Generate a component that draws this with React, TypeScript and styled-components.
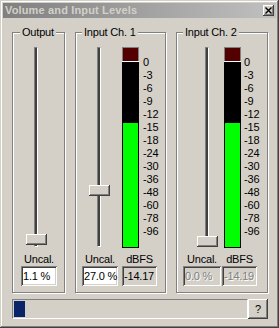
import React from 'react';
import styled, { createGlobalStyle } from 'styled-components';

const GlobalStyle = createGlobalStyle`
  html, body {
    margin: 0;
    padding: 0;
    background: #d4d0c8;
  }
  body {
    font-family: "Liberation Sans", Arial, sans-serif;
    font-size: 11px;
    letter-spacing: -0.2px;
    color: #000;
  }
`;

const SCALE = [0, -3, -6, -9, -12, -15, -18, -24, -30, -36, -48, -60, -78, -96];

// meter geometry: bar top sits at the "0" mark, bar bottom 185px below
const BAR_HEIGHT = 185;
const STEP = 12.95;

const levelToFill = (db: number) => {
  let idx = SCALE.length - 1;
  for (let i = 0; i < SCALE.length - 1; i++) {
    if (db <= SCALE[i] && db >= SCALE[i + 1]) {
      idx = i + (SCALE[i] - db) / (SCALE[i] - SCALE[i + 1]);
      break;
    }
  }
  return Math.round(BAR_HEIGHT - idx * STEP);
};

const Window = styled.div`
  width: 279px;
  height: 328px;
  box-sizing: border-box;
  padding: 3px;
  background: #d4d0c8;
  box-shadow: inset -1px -1px #404040, inset 1px 1px #d4d0c8,
    inset -2px -2px #808080, inset 2px 2px #fff;
  display: flex;
  flex-direction: column;
`;

const TitleBar = styled.div`
  height: 15px;
  display: flex;
  align-items: center;
  justify-content: space-between;
  padding: 0 2px;
  background: linear-gradient(to right, #808080, #c0c0c0);
`;

const Title = styled.span`
  font-weight: bold;
  font-size: 11px;
  letter-spacing: 0.15px;
  line-height: 15px;
  color: #d4d0c8;
`;

const CloseButton = styled.div`
  width: 11px;
  height: 11px;
  box-sizing: border-box;
  background: #d4d0c8;
  box-shadow: inset -1px -1px #404040, inset 1px 1px #fff, inset -2px -2px #808080;
  display: flex;
  align-items: center;
  justify-content: center;
`;

const Body = styled.div`
  display: flex;
  flex-direction: column;
  gap: 6px;
  padding: 14px 8px 0 9px;
`;

const GroupRow = styled.div`
  display: flex;
  gap: 10px;
`;

const GroupBox = styled.div<{ $width: number }>`
  position: relative;
  box-sizing: border-box;
  width: ${p => p.$width}px;
  height: 261px;
  border: 1px solid #808080;
  box-shadow: inset 1px 1px #fff, 1px 1px #fff;
  padding-top: 14px;
  display: flex;
  flex-direction: column;
`;

const Legend = styled.span<{ $inset: number }>`
  position: absolute;
  top: -7px;
  left: ${p => p.$inset}px;
  padding: 0 2px;
  line-height: 13px;
  background: #d4d0c8;
  white-space: nowrap;
`;

const MeterArea = styled.div<{ $offset: number }>`
  display: flex;
  height: 201px;
  padding-left: ${p => p.$offset}px;
`;

const Slider = styled.div`
  position: relative;
  width: 21px;
  height: 200px;
  flex-shrink: 0;
`;

const Track = styled.div`
  width: 4px;
  height: 100%;
  margin-left: 8px;
  box-sizing: border-box;
  background: #404040;
  border-left: 1px solid #808080;
  border-top: 1px solid #808080;
  border-right: 1px solid #fff;
  border-bottom: 1px solid #fff;
`;

const Thumb = styled.div`
  position: absolute;
  left: 0;
  width: 21px;
  height: 11px;
  box-sizing: border-box;
  background: #d4d0c8;
  box-shadow: inset -1px -1px #404040, inset 1px 1px #fff, inset -2px -2px #808080;
`;

const Meter = styled.div<{ $gap: number }>`
  width: 17px;
  height: 201px;
  margin-left: ${p => p.$gap}px;
  display: flex;
  flex-direction: column;
  flex-shrink: 0;
`;

const Clip = styled.div`
  height: 14px;
  box-sizing: border-box;
  background: #520000;
  border: 1px solid #808080;
  border-bottom: none;
`;

const Separator = styled.div`
  height: 1px;
  background: #fff;
`;

const Bar = styled.div`
  flex: 1;
  background: #000;
  padding: 0 1px 1px;
  display: flex;
  flex-direction: column;
  justify-content: flex-end;
`;

const Fill = styled.div`
  background: #00ff00;
`;

const Scale = styled.div<{ $gap: number }>`
  margin-left: ${p => p.$gap}px;
  padding-top: 9px;
  display: flex;
  flex-direction: column;
  line-height: 13px;
`;

const FieldRow = styled.div<{ $offset: number; $gap: number }>`
  display: flex;
  padding-left: ${p => p.$offset}px;
  gap: ${p => p.$gap}px;
`;

const Caption = styled.div<{ $width: number }>`
  width: ${p => p.$width}px;
  margin-top: 5px;
  line-height: 13px;
  text-align: center;
  white-space: nowrap;
`;

const Edit = styled.div<{ $width: number; $readOnly?: boolean; $disabled?: boolean }>`
  width: ${p => p.$width}px;
  height: 20px;
  box-sizing: border-box;
  padding: 2px 2px 0 2px;
  line-height: 16px;
  white-space: nowrap;
  overflow: hidden;
  background: ${p => (p.$readOnly || p.$disabled ? '#d4d0c8' : '#fff')};
  color: ${p => (p.$disabled ? '#808080' : '#000')};
  text-shadow: ${p => (p.$disabled ? '1px 1px 0 #fff' : 'none')};
  box-shadow: inset 1px 1px #808080, inset -1px -1px #fff,
    inset 2px 2px #404040, inset -2px -2px #d4d0c8;
`;

const BottomRow = styled.div`
  display: flex;
  height: 20px;
`;

const Progress = styled.div`
  flex: 1;
  box-sizing: border-box;
  padding: 1px;
  border-top: 1px solid #808080;
  border-left: 1px solid #808080;
  border-bottom: 1px solid #fff;
  border-right: 1px solid #fff;
`;

const ProgressBlock = styled.div`
  width: 11px;
  height: 100%;
  background: #0a246a;
`;

const HelpButton = styled.div`
  width: 20px;
  height: 20px;
  box-sizing: border-box;
  background: #d4d0c8;
  box-shadow: inset -1px -1px #404040, inset 1px 1px #fff, inset -2px -2px #808080;
  display: flex;
  align-items: center;
  justify-content: center;
  line-height: 13px;
`;

type Field = { label: string; value: string; width: number; readOnly?: boolean };

type Group = {
  title: string;
  width: number;
  inset: number;
  sliderOffset: number;
  percent: number;
  meterGap?: number;
  scaleGap?: number;
  level?: number;
  fieldOffset: number;
  fieldGap: number;
  disabled?: boolean;
  fields: Field[];
};

const groups: Group[] = [
  {
    title: 'Output',
    width: 53,
    inset: 7,
    sliderOffset: 13,
    percent: 1.1,
    fieldOffset: 8,
    fieldGap: 0,
    fields: [{ label: 'Uncal.', value: '1.1 %', width: 36 }],
  },
  {
    title: 'Input Ch. 1',
    width: 91,
    inset: 6,
    sliderOffset: 13,
    percent: 27,
    meterGap: 12,
    scaleGap: 4,
    level: -14.17,
    fieldOffset: 6,
    fieldGap: 4,
    fields: [
      { label: 'Uncal.', value: '27.0 %', width: 36 },
      { label: 'dBFS', value: '-14.17', width: 35, readOnly: true },
    ],
  },
  {
    title: 'Input Ch. 2',
    width: 92,
    inset: 6,
    sliderOffset: 20,
    percent: 0,
    meterGap: 6,
    scaleGap: 3,
    level: -14.19,
    fieldOffset: 6,
    fieldGap: 1,
    disabled: true,
    fields: [
      { label: 'Uncal.', value: '0.0 %', width: 38 },
      { label: 'dBFS', value: '-14.19', width: 35, readOnly: true },
    ],
  },
];

const CloseGlyph = () => (
  <svg width="7" height="7" viewBox="0 0 7 7">
    <path d="M0.5 0.5 L6.5 6.5 M6.5 0.5 L0.5 6.5" stroke="#000" strokeWidth="1.4" fill="none" />
  </svg>
);

const LevelGroup = ({ g }: { g: Group }) => (
  <GroupBox $width={g.width}>
    <Legend $inset={g.inset}>{g.title}</Legend>
    <MeterArea $offset={g.sliderOffset}>
      <Slider>
        <Track />
        <Thumb style={{ top: Math.round(189 * (1 - g.percent / 100)) }} />
      </Slider>
      {g.level !== undefined && (
        <>
          <Meter $gap={g.meterGap ?? 0}>
            <Clip />
            <Separator />
            <Bar>
              <Fill style={{ height: levelToFill(g.level) }} />
            </Bar>
          </Meter>
          <Scale $gap={g.scaleGap ?? 0}>
            {SCALE.map(s => (
              <span key={s}>{s}</span>
            ))}
          </Scale>
        </>
      )}
    </MeterArea>
    <FieldRow $offset={g.fieldOffset} $gap={g.fieldGap}>
      {g.fields.map(f => (
        <Caption key={f.label} $width={f.width}>{f.label}</Caption>
      ))}
    </FieldRow>
    <FieldRow $offset={g.fieldOffset} $gap={g.fieldGap}>
      {g.fields.map(f => (
        <Edit key={f.label} $width={f.width} $readOnly={f.readOnly} $disabled={g.disabled}>
          {f.value}
        </Edit>
      ))}
    </FieldRow>
  </GroupBox>
);

export default function App() {
  return (
    <>
      <GlobalStyle />
      <Window>
        <TitleBar>
          <Title>Volume and Input Levels</Title>
          <CloseButton>
            <CloseGlyph />
          </CloseButton>
        </TitleBar>
        <Body>
          <GroupRow>
            {groups.map(g => (
              <LevelGroup key={g.title} g={g} />
            ))}
          </GroupRow>
          <BottomRow>
            <Progress>
              <ProgressBlock />
            </Progress>
            <HelpButton>?</HelpButton>
          </BottomRow>
        </Body>
      </Window>
    </>
  );
}
